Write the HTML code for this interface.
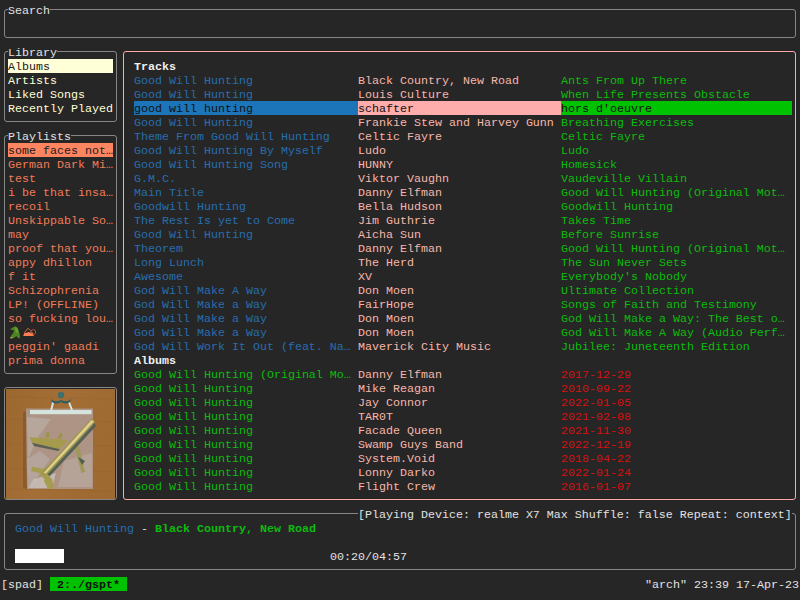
<!DOCTYPE html>
<html><head><meta charset="utf-8"><style>
html,body{margin:0;padding:0;}
body{width:800px;height:600px;background:#262626;position:relative;overflow:hidden;font-family:"Liberation Mono",monospace;font-size:11.67px;line-height:14px;}
.t{position:absolute;white-space:pre;height:13px;padding-top:1px;}
.b{position:absolute;border:1px solid;border-radius:3px;}
</style></head><body>
<div class="b" style="left:4px;top:9px;width:790px;height:27px;border-color:#868686"></div>
<div class="b" style="left:4px;top:51px;width:111px;height:69px;border-color:#868686"></div>
<div class="b" style="left:4px;top:135px;width:111px;height:237px;border-color:#868686"></div>
<div class="b" style="left:4px;top:387px;width:111px;height:111px;border-color:#868686"></div>
<div class="b" style="left:123px;top:51px;width:671px;height:447px;border-color:#ffa8a8"></div>
<div class="b" style="left:4px;top:513px;width:790px;height:55px;border-color:#868686"></div>
<div class="t" style="left:8px;top:3px;color:#e2e2e2;background:#262626;">Search</div>
<div class="t" style="left:8px;top:45px;color:#e2e2e2;background:#262626;">Library</div>
<div class="t" style="left:8px;top:129px;color:#e2e2e2;background:#262626;">Playlists</div>
<div class="t" style="left:8px;top:59px;color:#202020;background:#ffffd7;width:105px;">Albums</div>
<div class="t" style="left:8px;top:73px;color:#ffffd7;">Artists</div>
<div class="t" style="left:8px;top:87px;color:#ffffd7;">Liked Songs</div>
<div class="t" style="left:8px;top:101px;color:#ffffd7;">Recently Played</div>
<div class="t" style="left:8px;top:143px;color:#202020;background:#ff8460;width:105px;">some faces not…</div>
<div class="t" style="left:8px;top:157px;color:#f07c58;">German Dark Mi…</div>
<div class="t" style="left:8px;top:171px;color:#f07c58;">test</div>
<div class="t" style="left:8px;top:185px;color:#f07c58;">i be that insa…</div>
<div class="t" style="left:8px;top:199px;color:#f07c58;">recoil</div>
<div class="t" style="left:8px;top:213px;color:#f07c58;">Unskippable So…</div>
<div class="t" style="left:8px;top:227px;color:#f07c58;">may</div>
<div class="t" style="left:8px;top:241px;color:#f07c58;">proof that you…</div>
<div class="t" style="left:8px;top:255px;color:#f07c58;">appy dhillon</div>
<div class="t" style="left:8px;top:269px;color:#f07c58;">f it</div>
<div class="t" style="left:8px;top:283px;color:#f07c58;">Schizophrenia</div>
<div class="t" style="left:8px;top:297px;color:#f07c58;">LP! (OFFLINE)</div>
<div class="t" style="left:8px;top:311px;color:#f07c58;">so fucking lou…</div>
<div class="t" style="left:8px;top:339px;color:#f07c58;">peggin&#x27; gaadi</div>
<div class="t" style="left:8px;top:353px;color:#f07c58;">prima donna</div>
<div class="t" style="left:134px;top:59px;color:#f0f0f0;font-weight:bold;">Tracks</div>
<div class="t" style="left:134px;top:73px;color:#276eae;">Good Will Hunting</div>
<div class="t" style="left:358px;top:73px;color:#f8b6aa;">Black Country, New Road</div>
<div class="t" style="left:561px;top:73px;color:#0cbc0c;">Ants From Up There</div>
<div class="t" style="left:134px;top:87px;color:#276eae;">Good Will Hunting</div>
<div class="t" style="left:358px;top:87px;color:#f8b6aa;">Louis Culture</div>
<div class="t" style="left:561px;top:87px;color:#0cbc0c;">When Life Presents Obstacle</div>
<div class="t" style="left:134px;top:101px;color:#101010;background:#1c75b8;width:224px;">good will hunting</div>
<div class="t" style="left:358px;top:101px;color:#101010;background:#ffacac;width:203px;">schafter</div>
<div class="t" style="left:561px;top:101px;color:#101010;background:#00c200;width:231px;">hors d&#x27;oeuvre</div>
<div class="t" style="left:134px;top:115px;color:#276eae;">Good Will Hunting</div>
<div class="t" style="left:358px;top:115px;color:#f8b6aa;">Frankie Stew and Harvey Gunn</div>
<div class="t" style="left:561px;top:115px;color:#0cbc0c;">Breathing Exercises</div>
<div class="t" style="left:134px;top:129px;color:#276eae;">Theme From Good Will Hunting</div>
<div class="t" style="left:358px;top:129px;color:#f8b6aa;">Celtic Fayre</div>
<div class="t" style="left:561px;top:129px;color:#0cbc0c;">Celtic Fayre</div>
<div class="t" style="left:134px;top:143px;color:#276eae;">Good Will Hunting By Myself</div>
<div class="t" style="left:358px;top:143px;color:#f8b6aa;">Ludo</div>
<div class="t" style="left:561px;top:143px;color:#0cbc0c;">Ludo</div>
<div class="t" style="left:134px;top:157px;color:#276eae;">Good Will Hunting Song</div>
<div class="t" style="left:358px;top:157px;color:#f8b6aa;">HUNNY</div>
<div class="t" style="left:561px;top:157px;color:#0cbc0c;">Homesick</div>
<div class="t" style="left:134px;top:171px;color:#276eae;">G.M.C.</div>
<div class="t" style="left:358px;top:171px;color:#f8b6aa;">Viktor Vaughn</div>
<div class="t" style="left:561px;top:171px;color:#0cbc0c;">Vaudeville Villain</div>
<div class="t" style="left:134px;top:185px;color:#276eae;">Main Title</div>
<div class="t" style="left:358px;top:185px;color:#f8b6aa;">Danny Elfman</div>
<div class="t" style="left:561px;top:185px;color:#0cbc0c;">Good Will Hunting (Original Mot…</div>
<div class="t" style="left:134px;top:199px;color:#276eae;">Goodwill Hunting</div>
<div class="t" style="left:358px;top:199px;color:#f8b6aa;">Bella Hudson</div>
<div class="t" style="left:561px;top:199px;color:#0cbc0c;">Goodwill Hunting</div>
<div class="t" style="left:134px;top:213px;color:#276eae;">The Rest Is yet to Come</div>
<div class="t" style="left:358px;top:213px;color:#f8b6aa;">Jim Guthrie</div>
<div class="t" style="left:561px;top:213px;color:#0cbc0c;">Takes Time</div>
<div class="t" style="left:134px;top:227px;color:#276eae;">Good Will Hunting</div>
<div class="t" style="left:358px;top:227px;color:#f8b6aa;">Aicha Sun</div>
<div class="t" style="left:561px;top:227px;color:#0cbc0c;">Before Sunrise</div>
<div class="t" style="left:134px;top:241px;color:#276eae;">Theorem</div>
<div class="t" style="left:358px;top:241px;color:#f8b6aa;">Danny Elfman</div>
<div class="t" style="left:561px;top:241px;color:#0cbc0c;">Good Will Hunting (Original Mot…</div>
<div class="t" style="left:134px;top:255px;color:#276eae;">Long Lunch</div>
<div class="t" style="left:358px;top:255px;color:#f8b6aa;">The Herd</div>
<div class="t" style="left:561px;top:255px;color:#0cbc0c;">The Sun Never Sets</div>
<div class="t" style="left:134px;top:269px;color:#276eae;">Awesome</div>
<div class="t" style="left:358px;top:269px;color:#f8b6aa;">XV</div>
<div class="t" style="left:561px;top:269px;color:#0cbc0c;">Everybody&#x27;s Nobody</div>
<div class="t" style="left:134px;top:283px;color:#276eae;">God Will Make A Way</div>
<div class="t" style="left:358px;top:283px;color:#f8b6aa;">Don Moen</div>
<div class="t" style="left:561px;top:283px;color:#0cbc0c;">Ultimate Collection</div>
<div class="t" style="left:134px;top:297px;color:#276eae;">God Will Make a Way</div>
<div class="t" style="left:358px;top:297px;color:#f8b6aa;">FairHope</div>
<div class="t" style="left:561px;top:297px;color:#0cbc0c;">Songs of Faith and Testimony</div>
<div class="t" style="left:134px;top:311px;color:#276eae;">God Will Make a Way</div>
<div class="t" style="left:358px;top:311px;color:#f8b6aa;">Don Moen</div>
<div class="t" style="left:561px;top:311px;color:#0cbc0c;">God Will Make a Way: The Best o…</div>
<div class="t" style="left:134px;top:325px;color:#276eae;">God Will Make a Way</div>
<div class="t" style="left:358px;top:325px;color:#f8b6aa;">Don Moen</div>
<div class="t" style="left:561px;top:325px;color:#0cbc0c;">God Will Make A Way (Audio Perf…</div>
<div class="t" style="left:134px;top:339px;color:#276eae;">God Will Work It Out (feat. Na…</div>
<div class="t" style="left:358px;top:339px;color:#f8b6aa;">Maverick City Music</div>
<div class="t" style="left:561px;top:339px;color:#0cbc0c;">Jubilee: Juneteenth Edition</div>
<div class="t" style="left:134px;top:353px;color:#f0f0f0;font-weight:bold;">Albums</div>
<div class="t" style="left:134px;top:367px;color:#0cbc0c;">Good Will Hunting (Original Mo…</div>
<div class="t" style="left:358px;top:367px;color:#f8b6aa;">Danny Elfman</div>
<div class="t" style="left:561px;top:367px;color:#d81010;">2017-12-29</div>
<div class="t" style="left:134px;top:381px;color:#0cbc0c;">Good Will Hunting</div>
<div class="t" style="left:358px;top:381px;color:#f8b6aa;">Mike Reagan</div>
<div class="t" style="left:561px;top:381px;color:#d81010;">2010-09-22</div>
<div class="t" style="left:134px;top:395px;color:#0cbc0c;">Good Will Hunting</div>
<div class="t" style="left:358px;top:395px;color:#f8b6aa;">Jay Connor</div>
<div class="t" style="left:561px;top:395px;color:#d81010;">2022-01-05</div>
<div class="t" style="left:134px;top:409px;color:#0cbc0c;">Good Will Hunting</div>
<div class="t" style="left:358px;top:409px;color:#f8b6aa;">TAR0T</div>
<div class="t" style="left:561px;top:409px;color:#d81010;">2021-02-08</div>
<div class="t" style="left:134px;top:423px;color:#0cbc0c;">Good Will Hunting</div>
<div class="t" style="left:358px;top:423px;color:#f8b6aa;">Facade Queen</div>
<div class="t" style="left:561px;top:423px;color:#d81010;">2021-11-30</div>
<div class="t" style="left:134px;top:437px;color:#0cbc0c;">Good Will Hunting</div>
<div class="t" style="left:358px;top:437px;color:#f8b6aa;">Swamp Guys Band</div>
<div class="t" style="left:561px;top:437px;color:#d81010;">2022-12-19</div>
<div class="t" style="left:134px;top:451px;color:#0cbc0c;">Good Will Hunting</div>
<div class="t" style="left:358px;top:451px;color:#f8b6aa;">System.Void</div>
<div class="t" style="left:561px;top:451px;color:#d81010;">2018-04-22</div>
<div class="t" style="left:134px;top:465px;color:#0cbc0c;">Good Will Hunting</div>
<div class="t" style="left:358px;top:465px;color:#f8b6aa;">Lonny Darko</div>
<div class="t" style="left:561px;top:465px;color:#d81010;">2022-01-24</div>
<div class="t" style="left:134px;top:479px;color:#0cbc0c;">Good Will Hunting</div>
<div class="t" style="left:358px;top:479px;color:#f8b6aa;">Flight Crew</div>
<div class="t" style="left:561px;top:479px;color:#d81010;">2016-01-07</div>
<div class="t" style="left:358px;top:507px;color:#e2e2e2;background:#262626;">[Playing Device: realme X7 Max Shuffle: false Repeat: context]</div>
<div class="t" style="left:15px;top:521px;color:#276eae;">Good Will Hunting</div>
<div class="t" style="left:141px;top:521px;color:#e2e2e2;">-</div>
<div class="t" style="left:155px;top:521px;color:#0cbc0c;font-weight:bold;">Black Country, New Road</div>
<div style="position:absolute;left:15px;top:549px;width:49px;height:14px;background:#ffffff"></div>
<div class="t" style="left:330px;top:549px;color:#e2e2e2;">00:20/04:57</div>
<div class="t" style="left:1px;top:577px;color:#e2e2e2;">[spad]</div>
<div class="t" style="left:50px;top:577px;color:#101010;background:#00c200;font-weight:bold;"> 2:./gspt* </div>
<div class="t" style="left:645px;top:577px;color:#e2e2e2;">&quot;arch&quot; 23:39 17-Apr-23</div>
<svg style="position:absolute;left:8px;top:325px" width="28" height="14" viewBox="0 0 28 14">
<path d="M2 4.2 L4.8 2.6 L7.2 1.2 L9.4 2.4 L10.8 5.8 L11.8 9.6 L11.8 13.2 L10 13 L8.8 11.2 L7 12 L5 13.3 L2 13.3 L3.2 10.5 L5.2 8 L6.2 5.6 L4.6 5 Z" fill="#4c8622"/>
<path d="M7 2.2 L9.2 3 L10.2 6.5 L9 8.5 L7.5 6 Z" fill="#6c9e36"/>
<path d="M2.4 12.3 L5 12.3 L4.3 13.3 L2 13.3 Z" fill="#d89860"/>
<path d="M15.2 11 L25.8 11 L24.5 7.2 L22.5 7.8 L20.5 7 L18 8 L16.5 7.5 Z" fill="#ff7f50"/>
<path d="M16.5 7.5 L20 3.2 L23 6.2" fill="none" stroke="#e0704a" stroke-width="0.9"/>
<circle cx="25.3" cy="7" r="2.4" fill="none" stroke="#c86040" stroke-width="0.8"/>
</svg>
<svg style="position:absolute;left:6px;top:389px" width="109" height="110" viewBox="0 0 109 110">
<defs>
<linearGradient id="wood" x1="0" y1="0" x2="1" y2="0.3">
<stop offset="0" stop-color="#9c6830"/><stop offset="0.5" stop-color="#a46e36"/><stop offset="1" stop-color="#9e6a32"/></linearGradient>
</defs>
<rect width="109" height="110" fill="url(#wood)"/>
<g stroke="#8e5c28" stroke-width="0.7" opacity="0.3">
<line x1="0" y1="8" x2="109" y2="10"/><line x1="0" y1="30" x2="109" y2="33"/><line x1="0" y1="55" x2="109" y2="57"/><line x1="0" y1="80" x2="109" y2="83"/><line x1="0" y1="100" x2="109" y2="102"/>
</g>
<path d="M17 24 L20 22 L21 100 L17 99 Z" fill="#6a4420" opacity="0.4"/>
<path d="M20 19.5 L87 19.5 L87 100 L21 100 Z" fill="#ad9484"/>
<path d="M21 28 L45 30 L32 48 L22 70 Z" fill="#c4c0c0" opacity="0.4"/>
<path d="M21 70 L34 62 L44 70 L30 90 L22 98 Z" fill="#c4c4c8" opacity="0.35"/>
<path d="M58 72 L86 64 L86 98 L52 98 Z" fill="#c0b8b4" opacity="0.4"/>
<path d="M28 90 L50 84 L46 99 L22 99 Z" fill="#dcdcdc" opacity="0.5"/>
<path d="M45.3 21 L47.3 12.5 M66 21 L62.7 12.5" stroke="#d8e4dc" stroke-width="2" fill="none"/>
<circle cx="55" cy="6" r="3.2" fill="#3f6e6c"/>
<path d="M45 10 Q49 14 55 11 Q61 14 65 10 L64 13 Q60 16 55 13 Q50 16 46 13 Z" fill="#2f5e60"/>
<rect x="24" y="21" width="61.5" height="4.2" fill="#d5e5dd"/>
<path d="M39.3 48.3 L41 43 L43.3 43.5 L43 48.3 Z M51.3 49.5 L54 44.3 L56.7 44.8 L55 49.7 Z" fill="#9a9448"/>
<path d="M23.3 48.3 L62 51 L54 60.3 L26 53.7 Z" fill="#a69a4c"/>
<path d="M26 53.7 L54 60.3 L52 62 L28 57 Z" fill="#4e5a4c" opacity="0.9"/>
<path d="M68.7 57.7 L73 57 L79 83 L75.3 84 Z" fill="#a0985a"/>
<path d="M72 68 L79 72 L76 76 Z" fill="#4e5e4e"/>
<path d="M26 77.7 L40.7 80.3 L44.7 91 L40 92 L33 84 L25 82 Z" fill="#a69c50"/>
<path d="M86 29 L89 33 L42 86.5 L37 86 L36 83 Z" fill="#9c9450"/>
<path d="M85.5 31 L88 32.5 L40 84.5 L37.5 84 Z" fill="#e0d08c"/>
<path d="M88.5 34 L90 37 L44 87 L41 86 Z" fill="#4c5c50" opacity="0.9"/>
<path d="M40 84 L46 90 L48 99 L42 100 L38 92 Z" fill="#a69c50"/>
</svg>
</body></html>
